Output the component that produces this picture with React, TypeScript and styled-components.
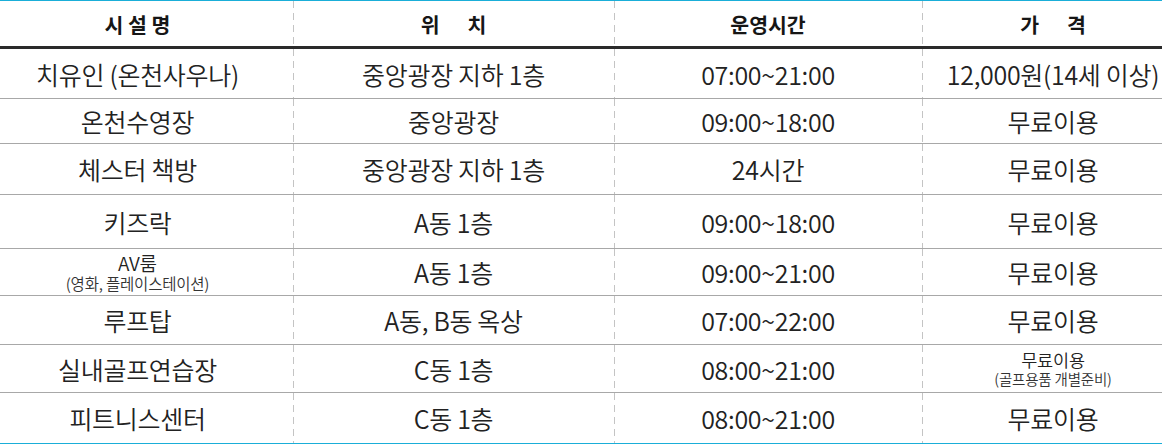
import React from "react";
import styled, { createGlobalStyle } from "styled-components";

const Global = createGlobalStyle`
  html, body { margin: 0; padding: 0; background: #fff; }
  body { font-family: "Noto Sans CJK KR", "Noto Sans", sans-serif; color: #222; }
`;

const Table = styled.table`
  width: 1162px;
  border-collapse: collapse;
  table-layout: fixed;
  border-top: 1px solid #1aaed8;
  border-bottom: 1px solid #1aaed8;
`;

const HeadRow = styled.tr`
  height: 47px;
  border-bottom: 3px solid #2a2a2a;
`;

const Row = styled.tr<{ $h: number; $last?: boolean }>`
  height: ${(p) => p.$h}px;
  border-bottom: ${(p) => (p.$last ? "none" : "1px solid #a8a8a8")};
`;

const dashed = `
  background-image: repeating-linear-gradient(to bottom, #c4c4c4 0 7px, transparent 7px 12px);
  background-size: 1px 100%;
  background-repeat: no-repeat;
  background-position: left top;
`;

const edgePad = (col: number) =>
  col === 0 ? "padding: 0 18px 0 0;" : col === 3 ? "padding: 0 0 0 22px;" : "padding: 0;";

const Th = styled.th<{ $col: number }>`
  ${(p) => edgePad(p.$col)}
  font-size: 20.5px;
  font-weight: 700;
  color: #161616;
  text-align: center;
  vertical-align: middle;
  white-space: pre;
  ${(p) => (p.$col === 0 ? "" : dashed)}
`;

const Td = styled.td<{ $col: number }>`
  ${(p) => edgePad(p.$col)}
  font-size: 25px;
  font-weight: 350;
  color: #222;
  text-align: center;
  vertical-align: middle;
  white-space: nowrap;
  line-height: 1.2;
  letter-spacing: -0.3px;
  ${(p) => (p.$col === 0 ? "" : dashed)}
`;

const Stack = styled.div`
  display: flex;
  flex-direction: column;
  align-items: center;
  line-height: 1.22;
  letter-spacing: -0.2px;
`;

const Main = styled.span<{ $size: number }>`
  font-size: ${(p) => p.$size}px;
`;

const Sub = styled.span<{ $size: number }>`
  font-size: ${(p) => p.$size}px;
  color: #333;
`;

type Cell = string | { main: string; sub: string; mainSize: number; subSize: number };

const rows: { h: number; cells: Cell[] }[] = [
  { h: 51, cells: ["치유인 (온천사우나)", "중앙광장 지하 1층", "07:00~21:00", "12,000원(14세 이상)"] },
  { h: 45, cells: ["온천수영장", "중앙광장", "09:00~18:00", "무료이용"] },
  { h: 51, cells: ["체스터 책방", "중앙광장 지하 1층", "24시간", "무료이용"] },
  { h: 54, cells: ["키즈락", "A동 1층", "09:00~18:00", "무료이용"] },
  {
    h: 47,
    cells: [
      { main: "AV룸", sub: "(영화, 플레이스테이션)", mainSize: 19, subSize: 15.5 },
      "A동 1층",
      "09:00~21:00",
      "무료이용",
    ],
  },
  { h: 49, cells: ["루프탑", "A동, B동 옥상", "07:00~22:00", "무료이용"] },
  {
    h: 48,
    cells: [
      "실내골프연습장",
      "C동 1층",
      "08:00~21:00",
      { main: "무료이용", sub: "(골프용품 개별준비)", mainSize: 17.5, subSize: 14.5 },
    ],
  },
  { h: 51, cells: ["피트니스센터", "C동 1층", "08:00~21:00", "무료이용"] },
];

const headers = ["시 설 명", "위      치", "운영시간", "가      격"];

export default function App() {
  return (
    <>
      <Global />
      <Table>
        <colgroup>
          <col style={{ width: 293 }} />
          <col style={{ width: 321 }} />
          <col style={{ width: 308 }} />
          <col style={{ width: 240 }} />
        </colgroup>
        <thead>
          <HeadRow>
            {headers.map((h, i) => (
              <Th key={i} $col={i}>
                {h}
              </Th>
            ))}
          </HeadRow>
        </thead>
        <tbody>
          {rows.map((r, ri) => (
            <Row key={ri} $h={r.h} $last={ri === rows.length - 1}>
              {r.cells.map((c, ci) => (
                <Td key={ci} $col={ci}>
                  {typeof c === "string" ? (
                    c
                  ) : (
                    <Stack>
                      <Main $size={c.mainSize}>{c.main}</Main>
                      <Sub $size={c.subSize}>{c.sub}</Sub>
                    </Stack>
                  )}
                </Td>
              ))}
            </Row>
          ))}
        </tbody>
      </Table>
    </>
  );
}
